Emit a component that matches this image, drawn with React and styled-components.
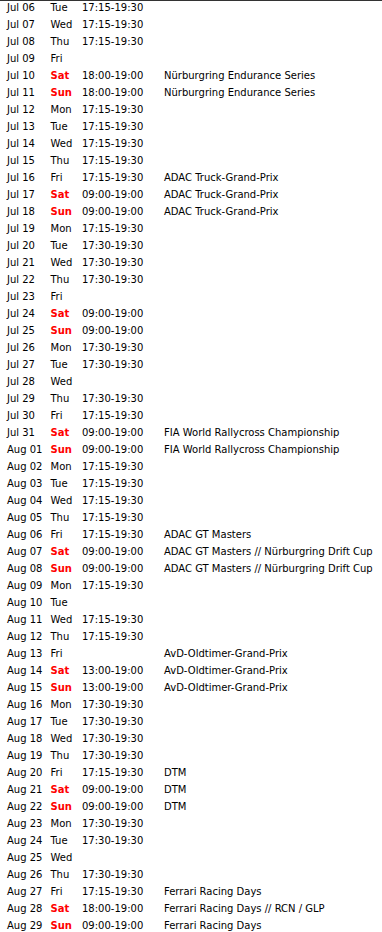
import React from "react";
import styled, { createGlobalStyle } from "styled-components";

const GlobalStyle = createGlobalStyle`
  html, body {
    margin: 0;
    padding: 0;
    background: #fff;
  }
  body {
    font-family: "DejaVu Sans", Verdana, sans-serif;
    font-size: 10px;
    color: #000;
  }
`;

const days = [
  ["Jul 06", "Tue", "17:15-19:30", ""],
  ["Jul 07", "Wed", "17:15-19:30", ""],
  ["Jul 08", "Thu", "17:15-19:30", ""],
  ["Jul 09", "Fri", "", ""],
  ["Jul 10", "Sat", "18:00-19:00", "Nürburgring Endurance Series"],
  ["Jul 11", "Sun", "18:00-19:00", "Nürburgring Endurance Series"],
  ["Jul 12", "Mon", "17:15-19:30", ""],
  ["Jul 13", "Tue", "17:15-19:30", ""],
  ["Jul 14", "Wed", "17:15-19:30", ""],
  ["Jul 15", "Thu", "17:15-19:30", ""],
  ["Jul 16", "Fri", "17:15-19:30", "ADAC Truck-Grand-Prix"],
  ["Jul 17", "Sat", "09:00-19:00", "ADAC Truck-Grand-Prix"],
  ["Jul 18", "Sun", "09:00-19:00", "ADAC Truck-Grand-Prix"],
  ["Jul 19", "Mon", "17:15-19:30", ""],
  ["Jul 20", "Tue", "17:30-19:30", ""],
  ["Jul 21", "Wed", "17:30-19:30", ""],
  ["Jul 22", "Thu", "17:30-19:30", ""],
  ["Jul 23", "Fri", "", ""],
  ["Jul 24", "Sat", "09:00-19:00", ""],
  ["Jul 25", "Sun", "09:00-19:00", ""],
  ["Jul 26", "Mon", "17:30-19:30", ""],
  ["Jul 27", "Tue", "17:30-19:30", ""],
  ["Jul 28", "Wed", "", ""],
  ["Jul 29", "Thu", "17:30-19:30", ""],
  ["Jul 30", "Fri", "17:15-19:30", ""],
  ["Jul 31", "Sat", "09:00-19:00", "FIA World Rallycross Championship"],
  ["Aug 01", "Sun", "09:00-19:00", "FIA World Rallycross Championship"],
  ["Aug 02", "Mon", "17:15-19:30", ""],
  ["Aug 03", "Tue", "17:15-19:30", ""],
  ["Aug 04", "Wed", "17:15-19:30", ""],
  ["Aug 05", "Thu", "17:15-19:30", ""],
  ["Aug 06", "Fri", "17:15-19:30", "ADAC GT Masters"],
  ["Aug 07", "Sat", "09:00-19:00", "ADAC GT Masters // Nürburgring Drift Cup"],
  ["Aug 08", "Sun", "09:00-19:00", "ADAC GT Masters // Nürburgring Drift Cup"],
  ["Aug 09", "Mon", "17:15-19:30", ""],
  ["Aug 10", "Tue", "", ""],
  ["Aug 11", "Wed", "17:15-19:30", ""],
  ["Aug 12", "Thu", "17:15-19:30", ""],
  ["Aug 13", "Fri", "", "AvD-Oldtimer-Grand-Prix"],
  ["Aug 14", "Sat", "13:00-19:00", "AvD-Oldtimer-Grand-Prix"],
  ["Aug 15", "Sun", "13:00-19:00", "AvD-Oldtimer-Grand-Prix"],
  ["Aug 16", "Mon", "17:30-19:30", ""],
  ["Aug 17", "Tue", "17:30-19:30", ""],
  ["Aug 18", "Wed", "17:30-19:30", ""],
  ["Aug 19", "Thu", "17:30-19:30", ""],
  ["Aug 20", "Fri", "17:15-19:30", "DTM"],
  ["Aug 21", "Sat", "09:00-19:00", "DTM"],
  ["Aug 22", "Sun", "09:00-19:00", "DTM"],
  ["Aug 23", "Mon", "17:30-19:30", ""],
  ["Aug 24", "Tue", "17:30-19:30", ""],
  ["Aug 25", "Wed", "", ""],
  ["Aug 26", "Thu", "17:30-19:30", ""],
  ["Aug 27", "Fri", "17:15-19:30", "Ferrari Racing Days"],
  ["Aug 28", "Sat", "18:00-19:00", "Ferrari Racing Days // RCN / GLP"],
  ["Aug 29", "Sun", "09:00-19:00", "Ferrari Racing Days"],
];

function App() {
  return (
    <>
      <GlobalStyle />
      <Schedule>
        {days.map(([date, day, time, event]) => {
          const weekend = day === "Sat" || day === "Sun";
          return (
            <Row key={date}>
              <Cell>{date}</Cell>
              <Day weekend={weekend ? 1 : 0}>{day}</Day>
              <Cell>{time}</Cell>
              <Cell>{event}</Cell>
            </Row>
          );
        })}
      </Schedule>
    </>
  );
}

const Schedule = styled.div`
  border-top: 1px solid #333;
  padding-left: 7px;
`;

const Row = styled.div`
  display: grid;
  grid-template-columns: 43.5px 31.5px 82px 1fr;
  height: 17px;
  line-height: 13px;
  white-space: nowrap;
`;

const Cell = styled.div`
  overflow: visible;
`;

const Day = styled(Cell)`
  color: ${(p) => (p.weekend ? "#ff0000" : "#000")};
  font-weight: ${(p) => (p.weekend ? "bold" : "normal")};
`;

export default App;
